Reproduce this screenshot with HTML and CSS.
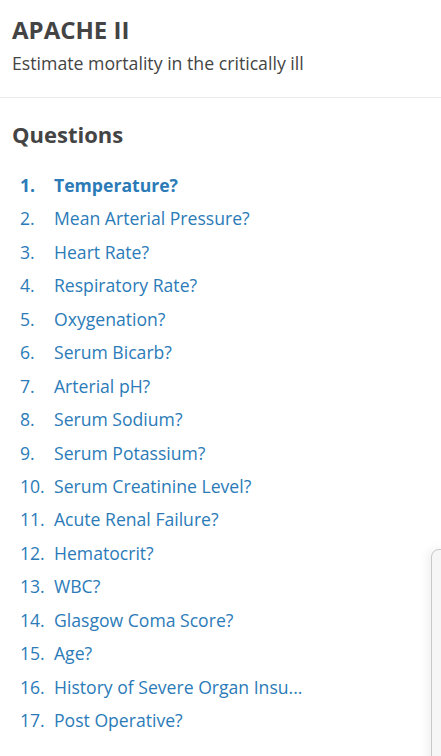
FILE: index.html
```html
<!DOCTYPE html>
<html>
<head>
    <meta charset="utf-8">
    <title>APACHE II</title>
    <link rel="stylesheet" href="styles.css">
</head>
<body>
    <div class="header">
        <h1>APACHE II</h1>
        <p>Estimate mortality in the critically ill</p>
    </div>

    <div class="questions">
        <h2>Questions</h2>
        <ol class="q-list">
            <li class="active"><span class="num">1.</span><span class="q">Temperature?</span></li>
            <li><span class="num">2.</span><span class="q">Mean Arterial Pressure?</span></li>
            <li><span class="num">3.</span><span class="q">Heart Rate?</span></li>
            <li><span class="num">4.</span><span class="q">Respiratory Rate?</span></li>
            <li><span class="num">5.</span><span class="q">Oxygenation?</span></li>
            <li><span class="num">6.</span><span class="q">Serum Bicarb?</span></li>
            <li><span class="num">7.</span><span class="q">Arterial pH?</span></li>
            <li><span class="num">8.</span><span class="q">Serum Sodium?</span></li>
            <li><span class="num">9.</span><span class="q">Serum Potassium?</span></li>
            <li><span class="num">10.</span><span class="q">Serum Creatinine Level?</span></li>
            <li><span class="num">11.</span><span class="q">Acute Renal Failure?</span></li>
            <li><span class="num">12.</span><span class="q">Hematocrit?</span></li>
            <li><span class="num">13.</span><span class="q">WBC?</span></li>
            <li><span class="num">14.</span><span class="q">Glasgow Coma Score?</span></li>
            <li><span class="num">15.</span><span class="q">Age?</span></li>
            <li><span class="num">16.</span><span class="q">History of Severe Organ Insu...</span></li>
            <li><span class="num">17.</span><span class="q">Post Operative?</span></li>
        </ol>
    </div>

    <div class="side-panel"></div>
</body>
</html>
```

FILE: styles.css
```css
html, body {
    margin: 0;
    padding: 0;
}

body {
    font-family: "Open Sans", Arial, sans-serif;
    background: #fff;
    color: #444;
    width: 441px;
    height: 756px;
    overflow: hidden;
    position: relative;
}

.header {
    padding: 14px 12px 0;
    height: 83px;
    border-bottom: 1px solid #ebebeb;
}

.header h1 {
    margin: 0;
    font-size: 24px;
    font-weight: 700;
    line-height: 32px;
    color: #444;
}

.header p {
    margin: 6px 0 0;
    font-size: 17.7px;
    line-height: 22px;
    color: #444;
}

.questions {
    padding: 20px 12px 0;
}

.questions h2 {
    margin: 0;
    font-size: 22px;
    font-weight: 700;
    line-height: 32px;
    color: #444;
}

.q-list {
    list-style: none;
    margin: 23px 0 0;
    padding: 0 0 0 8px;
}

.q-list li {
    display: flex;
    height: 33.45px;
    line-height: 24px;
    font-size: 17.6px;
    color: #2b7bb8;
}

.q-list .num {
    width: 34px;
}

.q-list li.active {
    font-weight: 700;
}

.side-panel {
    position: absolute;
    left: 431px;
    top: 549px;
    width: 40px;
    height: 260px;
    background: #f6f6f6;
    border: 1px solid #c8c8c8;
    border-radius: 8px;
    box-shadow: -4px 0 10px rgba(0, 0, 0, 0.06);
}
```
